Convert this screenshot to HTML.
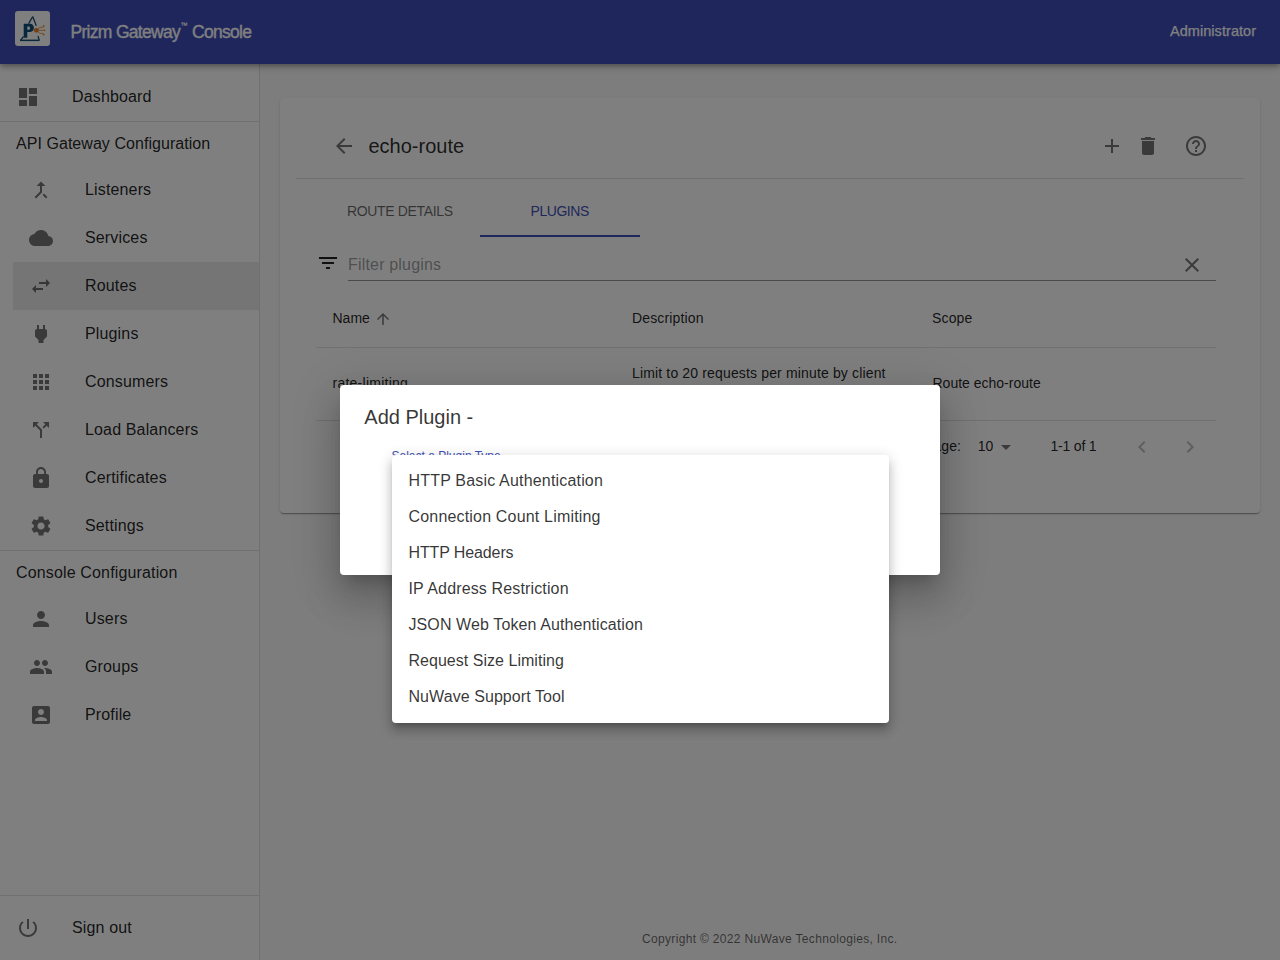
<!DOCTYPE html>
<html><head><meta charset="utf-8">
<style>
*{box-sizing:border-box;margin:0;padding:0}
html,body{width:1280px;height:960px;overflow:hidden}
body{font-family:"Liberation Sans",sans-serif;background:#fafafa;color:rgba(0,0,0,0.87);position:relative}
.abs{position:absolute}
.t{line-height:1;white-space:nowrap}
.div{position:absolute;height:1px;background:rgba(0,0,0,.12)}
#appbar{left:0;top:0;width:1280px;height:64px;background:#3d4cb8;box-shadow:0 2px 4px -1px rgba(0,0,0,.2),0 4px 5px 0 rgba(0,0,0,.14),0 1px 10px 0 rgba(0,0,0,.12);z-index:5}
#logo{left:15px;top:11px;width:35px;height:35px;background:#fff;border-radius:3px}
#side{left:0;top:64px;width:260px;height:896px;background:#fff;border-right:1px solid rgba(0,0,0,.12)}
#card{left:280px;top:98px;width:980px;height:415px;background:#fff;border-radius:4px;box-shadow:0 2px 1px -1px rgba(0,0,0,.2),0 1px 1px 0 rgba(0,0,0,.14),0 1px 3px 0 rgba(0,0,0,.12)}
#backdrop{left:0;top:0;width:1280px;height:960px;background:rgba(0,0,0,.5);z-index:10}
#dialog{left:340px;top:385px;width:600px;height:190px;background:#fff;border-radius:4px;z-index:11;box-shadow:0 11px 15px -7px rgba(0,0,0,.2),0 24px 38px 3px rgba(0,0,0,.14),0 9px 46px 8px rgba(0,0,0,.12)}
#menu{left:392px;top:455px;width:497px;height:268px;background:#fff;border-radius:4px;z-index:12;box-shadow:0 5px 5px -3px rgba(0,0,0,.2),0 8px 10px 1px rgba(0,0,0,.14),0 3px 14px 2px rgba(0,0,0,.12)}
</style></head><body>

<div id="appbar" class="abs">
<div id="logo" class="abs"><svg width="35" height="35" viewBox="0 0 35 35"><path d="M17.7 5.6 L13.6 12.6 M17.7 5.6 L21.3 14.8 M8.6 25.5 L5.6 29.2 M23 25 L24.2 29.2" stroke="#134f78" stroke-width="1.25" fill="none"/><path d="M5 28.6 H24.6 V30.1 H5z" fill="#134f78"/><path d="M8.7 12.7 H15.2 C17.4 12.7 18.9 14.4 18.9 16.85 C18.9 19.3 17.4 21 15.2 21 H12.3 V26.7 H8.7z M12.3 15.6 V18.7 H13.9 C14.6 18.7 15 18.1 15 17.15 C15 16.2 14.6 15.6 13.9 15.6z" fill="#0e5078"/><circle cx="21.3" cy="19.3" r="2.4" fill="#e8801e"/><path d="M22.5 19.3 H29.6 M22.8 18.2 L24.9 16.3 H28.4 M22.8 20.4 L24.9 22.4 H28.4" stroke="#e8801e" stroke-width="0.8" fill="none"/><circle cx="28.7" cy="14.9" r="0.95" fill="#e8801e"/><circle cx="29.6" cy="19.3" r="0.8" fill="#e8801e"/><circle cx="28.7" cy="23.6" r="0.95" fill="#e8801e"/></svg></div>
<div class="abs t" style="left:70.5px;top:24.00px;font-size:17.5px;color:#fff;letter-spacing:-0.7px;-webkit-text-stroke:0.35px #fff">Prizm Gateway</div>
<div class="abs t" style="left:179.5px;top:22px;font-size:8px;color:#fff;transform:scaleX(0.85);-webkit-text-stroke:0.2px #fff">™</div>
<div class="abs t" style="left:192px;top:24.00px;font-size:17.5px;color:#fff;letter-spacing:-0.7px;-webkit-text-stroke:0.35px #fff">Console</div>
<div class="abs t" style="left:1170px;top:24.00px;font-size:14.5px;color:#fff;-webkit-text-stroke:0.25px #fff;letter-spacing:0.05px">Administrator</div>
</div>
<div id="side" class="abs"></div>
<svg class="abs" style="left:16px;top:85px;width:24px;height:24px" viewBox="0 0 24 24"><path fill="rgba(0,0,0,.54)" d="M3 13h8V3H3v10zm0 8h8v-6H3v6zm10 0h8V11h-8v10zm0-18v6h8V3h-8z"/></svg>
<div class="abs t" style="left:72px;top:89.00px;font-size:16px;color:rgba(0,0,0,.87);letter-spacing:0.15px">Dashboard</div>
<div class="div" style="left:0;top:121px;width:259px"></div>
<div class="abs t" style="left:16px;top:136.00px;font-size:16px;color:rgba(0,0,0,.87);letter-spacing:0.05px">API Gateway Configuration</div>
<svg class="abs" style="left:29px;top:178px;width:24px;height:24px" viewBox="0 0 24 24"><path fill="rgba(0,0,0,.54)" d="M17 20.41L18.41 19 15 15.59 13.59 17 17 20.41zM7.5 8H11v5.59L5.59 19 7 20.41l6-6V8h3.5L12 3.5 7.5 8z"/></svg>
<div class="abs t" style="left:85px;top:182.00px;font-size:16px;color:rgba(0,0,0,.87);letter-spacing:0.15px">Listeners</div>
<svg class="abs" style="left:29px;top:226px;width:24px;height:24px" viewBox="0 0 24 24"><path fill="rgba(0,0,0,.54)" d="M19.35 10.04C18.67 6.59 15.64 4 12 4 9.11 4 6.6 5.64 5.35 8.04 2.34 8.36 0 10.91 0 14c0 3.310 2.690 6 6 6h13c2.76 0 5-2.24 5-5 0-2.64-2.05-4.78-4.65-4.96z"/></svg>
<div class="abs t" style="left:85px;top:230.00px;font-size:16px;color:rgba(0,0,0,.87);letter-spacing:0.15px">Services</div>
<div class="abs" style="left:13px;top:262px;width:246px;height:48px;background:rgba(0,0,0,.08)"></div>
<svg class="abs" style="left:29px;top:274px;width:24px;height:24px" viewBox="0 0 24 24"><path fill="rgba(0,0,0,.54)" d="M6.99 11L3 15l3.99 4v-3H14v-2H6.99v-3zM21 9l-3.99-4v3H10v2h7.01v3L21 9z"/></svg>
<div class="abs t" style="left:85px;top:278.00px;font-size:16px;color:rgba(0,0,0,.87);letter-spacing:0.15px">Routes</div>
<svg class="abs" style="left:29px;top:322px;width:24px;height:24px" viewBox="0 0 24 24"><path fill="rgba(0,0,0,.54)" d="M16.01 7L16 3h-2v4h-4V3H8v4h-.01C7 6.99 6 7.99 6 8.99v5.49L9.5 18v3h5v-3l3.5-3.51v-5.5c0-1-1-2-1.99-1.99z"/></svg>
<div class="abs t" style="left:85px;top:326.00px;font-size:16px;color:rgba(0,0,0,.87);letter-spacing:0.15px">Plugins</div>
<svg class="abs" style="left:29px;top:370px;width:24px;height:24px" viewBox="0 0 24 24"><path fill="rgba(0,0,0,.54)" d="M4 8h4V4H4v4zm6 12h4v-4h-4v4zm-6 0h4v-4H4v4zm0-6h4v-4H4v4zm6 0h4v-4h-4v4zm6-10v4h4V4h-4zm-6 4h4V4h-4v4zm6 6h4v-4h-4v4zm0 6h4v-4h-4v4z"/></svg>
<div class="abs t" style="left:85px;top:374.00px;font-size:16px;color:rgba(0,0,0,.87);letter-spacing:0.15px">Consumers</div>
<svg class="abs" style="left:29px;top:418px;width:24px;height:24px" viewBox="0 0 24 24"><path fill="rgba(0,0,0,.54)" d="M14 4l2.29 2.29-2.88 2.88 1.42 1.42 2.88-2.88L20 10V4zm-4 0H4v6l2.29-2.29 4.71 4.7V20h2v-8.41l-5.29-5.3z"/></svg>
<div class="abs t" style="left:85px;top:422.00px;font-size:16px;color:rgba(0,0,0,.87);letter-spacing:0.15px">Load Balancers</div>
<svg class="abs" style="left:29px;top:466px;width:24px;height:24px" viewBox="0 0 24 24"><path fill="rgba(0,0,0,.54)" d="M18 8h-1V6c0-2.76-2.24-5-5-5S7 3.24 7 6v2H6c-1.1 0-2 .9-2 2v10c0 1.1.9 2 2 2h12c1.1 0 2-.9 2-2V10c0-1.1-.9-2-2-2zm-6 9c-1.1 0-2-.9-2-2s.9-2 2-2 2 .9 2 2-.9 2-2 2zm3.1-9H8.9V6c0-1.71 1.39-3.1 3.1-3.1 1.71 0 3.1 1.39 3.1 3.1v2z"/></svg>
<div class="abs t" style="left:85px;top:470.00px;font-size:16px;color:rgba(0,0,0,.87);letter-spacing:0.15px">Certificates</div>
<svg class="abs" style="left:29px;top:514px;width:24px;height:24px" viewBox="0 0 24 24"><path fill="rgba(0,0,0,.54)" d="M19.14 12.94c.04-.3.06-.61.06-.94 0-.32-.02-.64-.07-.94l2.03-1.58c.18-.14.23-.41.12-.61l-1.92-3.32c-.12-.22-.37-.29-.59-.22l-2.39.96c-.5-.38-1.03-.7-1.62-.94l-.36-2.54c-.04-.24-.24-.41-.48-.41h-3.84c-.24 0-.43.17-.47.41l-.36 2.54c-.59.24-1.13.57-1.62.94l-2.39-.96c-.22-.08-.47 0-.59.22L2.74 8.870c-.12.21-.08.47.12.61l2.03 1.58c-.05.3-.09.63-.09.94s.02.64.07.94l-2.03 1.58c-.18.14-.23.41-.12.61l1.92 3.32c.12.22.37.29.59.22l2.39-.96c.5.38 1.03.7 1.62.94l.36 2.54c.05.24.24.41.48.41h3.84c.24 0 .44-.17.47-.41l.36-2.54c.59-.24 1.13-.56 1.62-.94l2.39.96c.22.08.47 0 .59-.22l1.92-3.32c.12-.22.07-.47-.12-.61l-2.01-1.58zM12 15.6c-1.98 0-3.6-1.62-3.6-3.6s1.62-3.6 3.6-3.6 3.6 1.62 3.6 3.6-1.62 3.6-3.6 3.6z"/></svg>
<div class="abs t" style="left:85px;top:518.00px;font-size:16px;color:rgba(0,0,0,.87);letter-spacing:0.15px">Settings</div>
<div class="div" style="left:0;top:550px;width:259px"></div>
<div class="abs t" style="left:16px;top:565.00px;font-size:16px;color:rgba(0,0,0,.87);letter-spacing:0.15px">Console Configuration</div>
<svg class="abs" style="left:29px;top:607px;width:24px;height:24px" viewBox="0 0 24 24"><path fill="rgba(0,0,0,.54)" d="M12 12c2.21 0 4-1.79 4-4s-1.79-4-4-4-4 1.79-4 4 1.79 4 4 4zm0 2c-2.67 0-8 1.34-8 4v2h16v-2c0-2.66-5.33-4-8-4z"/></svg>
<div class="abs t" style="left:85px;top:611.00px;font-size:16px;color:rgba(0,0,0,.87);letter-spacing:0.15px">Users</div>
<svg class="abs" style="left:29px;top:655px;width:24px;height:24px" viewBox="0 0 24 24"><path fill="rgba(0,0,0,.54)" d="M16 11c1.66 0 2.99-1.34 2.99-3S17.66 5 16 5c-1.66 0-3 1.34-3 3s1.34 3 3 3zm-8 0c1.66 0 2.99-1.34 2.990-3S9.66 5 8 5C6.34 5 5 6.34 5 8s1.34 3 3 3zm0 2c-2.33 0-7 1.17-7 3.5V19h14v-2.5c0-2.33-4.67-3.5-7-3.5zm8 0c-.29 0-.62.02-.97.05 1.16.84 1.97 1.97 1.97 3.45V19h6v-2.5c0-2.33-4.67-3.5-7-3.5z"/></svg>
<div class="abs t" style="left:85px;top:659.00px;font-size:16px;color:rgba(0,0,0,.87);letter-spacing:0.15px">Groups</div>
<svg class="abs" style="left:29px;top:703px;width:24px;height:24px" viewBox="0 0 24 24"><path fill="rgba(0,0,0,.54)" d="M3 5v14c0 1.1.89 2 2 2h14c1.1 0 2-.9 2-2V5c0-1.1-.9-2-2-2H5c-1.11 0-2 .9-2 2zm12 4c0 1.66-1.34 3-3 3s-3-1.34-3-3 1.34-3 3-3 3 1.34 3 3zm-9 8c0-2 4-3.1 6-3.1s6 1.1 6 3.1v1H6v-1z"/></svg>
<div class="abs t" style="left:85px;top:707.00px;font-size:16px;color:rgba(0,0,0,.87);letter-spacing:0.15px">Profile</div>
<div class="div" style="left:0;top:895px;width:259px"></div>
<svg class="abs" style="left:16px;top:916px;width:24px;height:24px" viewBox="0 0 24 24"><path fill="rgba(0,0,0,.54)" d="M13 3h-2v10h2V3zm4.83 2.17l-1.42 1.42C17.99 7.86 19 9.81 19 12c0 3.87-3.13 7-7 7s-7-3.13-7-7c0-2.19 1.01-4.14 2.58-5.42L6.17 5.17C4.23 6.82 3 9.26 3 12c0 4.97 4.03 9 9 9s9-4.03 9-9c0-2.74-1.23-5.18-3.17-6.83z"/></svg>
<div class="abs t" style="left:72px;top:920.00px;font-size:16px;color:rgba(0,0,0,.87);letter-spacing:0.15px">Sign out</div>
<div id="card" class="abs"></div>
<svg class="abs" style="left:332px;top:134px;width:24px;height:24px" viewBox="0 0 24 24"><path fill="rgba(0,0,0,.54)" d="M20 11H7.83l5.59-5.59L12 4l-8 8 8 8 1.41-1.41L7.83 13H20v-2z"/></svg>
<div class="abs t" style="left:368.5px;top:136.00px;font-size:20px;color:rgba(0,0,0,.84);">echo-route</div>
<svg class="abs" style="left:1100px;top:134px;width:24px;height:24px" viewBox="0 0 24 24"><path fill="rgba(0,0,0,.54)" d="M19 13h-6v6h-2v-6H5v-2h6V5h2v6h6v2z"/></svg>
<svg class="abs" style="left:1136px;top:134px;width:24px;height:24px" viewBox="0 0 24 24"><path fill="rgba(0,0,0,.54)" d="M6 19c0 1.1.9 2 2 2h8c1.1 0 2-.9 2-2V7H6v12zM19 4h-3.5l-1-1h-5l-1 1H5v2h14V4z"/></svg>
<svg class="abs" style="left:1184px;top:134px;width:24px;height:24px" viewBox="0 0 24 24"><path fill="rgba(0,0,0,.54)" d="M11 18h2v-2h-2v2zm1-16C6.48 2 2 6.48 2 12s4.48 10 10 10 10-4.48 10-10S17.520 2 12 2zm0 18c-4.41 0-8-3.59-8-8s3.59-8 8-8 8 3.59 8 8-3.59 8-8 8zm0-14c-2.21 0-4 1.79-4 4h2c0-1.1.9-2 2-2s2 .9 2 2c0 2-3 1.75-3 5h2c0-2.25 3-2.5 3-5 0-2.21-1.79-4-4-4z"/></svg>
<div class="div" style="left:296px;top:178px;width:948px"></div>
<div class="abs t" style="left:347px;top:204.00px;font-size:14px;color:rgba(0,0,0,.6);letter-spacing:-0.35px">ROUTE DETAILS</div>
<div class="abs t" style="left:530.5px;top:204.00px;font-size:14px;color:#3f51b5;letter-spacing:-0.45px">PLUGINS</div>
<div class="abs" style="left:480px;top:235px;width:160px;height:2px;background:#3f51b5"></div>
<svg class="abs" style="left:316px;top:251px;width:24px;height:24px" viewBox="0 0 24 24"><path fill="rgba(0,0,0,.87)" d="M10 18h4v-2h-4v2zM3 6v2h18V6H3zm3 7h12v-2H6v2z"/></svg>
<div class="abs t" style="left:348px;top:257.00px;font-size:16px;color:rgba(0,0,0,.4);letter-spacing:0.18px">Filter plugins</div>
<svg class="abs" style="left:1180px;top:253px;width:24px;height:24px" viewBox="0 0 24 24"><path fill="rgba(0,0,0,.54)" d="M19 6.41L17.59 5 12 10.59 6.41 5 5 6.41 10.59 12 5 17.59 6.41 19 12 13.41 17.59 19 19 17.59 13.41 12z"/></svg>
<div class="abs" style="left:348px;top:280px;width:868px;height:1px;background:rgba(0,0,0,.42)"></div>
<div class="abs t" style="left:332.5px;top:311.00px;font-size:14px;color:rgba(0,0,0,.87);letter-spacing:0px">Name</div>
<svg class="abs" style="left:373.8px;top:310px;width:18px;height:18px" viewBox="0 0 24 24"><path fill="rgba(0,0,0,.54)" d="M4 12l1.41 1.41L11 7.83V20h2V7.83l5.58 5.59L20 12l-8-8-8 8z"/></svg>
<div class="abs t" style="left:632px;top:311.00px;font-size:14px;color:rgba(0,0,0,.87);letter-spacing:0.15px">Description</div>
<div class="abs t" style="left:932px;top:311.00px;font-size:14px;color:rgba(0,0,0,.87);letter-spacing:0.15px">Scope</div>
<div class="div" style="left:316px;top:347px;width:900px;background:rgba(224,224,224,1)"></div>
<div class="abs t" style="left:332.5px;top:376.00px;font-size:14px;color:rgba(0,0,0,.87);letter-spacing:0.25px">rate-limiting</div>
<div class="abs t" style="left:632px;top:366.00px;font-size:14px;color:rgba(0,0,0,.87);letter-spacing:0.15px">Limit to 20 requests per minute by client</div>
<div class="abs t" style="left:932.5px;top:376.00px;font-size:14px;color:rgba(0,0,0,.87);letter-spacing:0px">Route echo-route</div>
<div class="div" style="left:316px;top:420px;width:900px;background:rgba(224,224,224,1)"></div>
<div class="abs t" style="left:861px;top:439.00px;font-size:14px;color:rgba(0,0,0,.87);letter-spacing:0.15px">Rows per page:</div>
<div class="abs t" style="left:977.8px;top:439.00px;font-size:14px;color:rgba(0,0,0,.87);">10</div>
<svg class="abs" style="left:994.3px;top:434.5px;width:24px;height:24px" viewBox="0 0 24 24"><path fill="rgba(0,0,0,.54)" d="M7 10l5 5 5-5z"/></svg>
<div class="abs t" style="left:1050.5px;top:439.00px;font-size:14px;color:rgba(0,0,0,.87);letter-spacing:-0.2px">1-1 of 1</div>
<svg class="abs" style="left:1130px;top:434.5px;width:24px;height:24px" viewBox="0 0 24 24"><path fill="rgba(0,0,0,.26)" d="M15.41 16.59L10.83 12l4.58-4.59L14 6l-6 6 6 6 1.41-1.41z"/></svg>
<svg class="abs" style="left:1178px;top:434.5px;width:24px;height:24px" viewBox="0 0 24 24"><path fill="rgba(0,0,0,.26)" d="M8.59 16.59L13.17 12 8.59 7.41 10 6l6 6-6 6-1.41-1.41z"/></svg>
<div class="abs t" style="left:642px;top:933.00px;font-size:12px;color:rgba(0,0,0,.6);letter-spacing:0.33px">Copyright © 2022 NuWave Technologies, Inc.</div>
<div id="backdrop" class="abs"></div>
<div id="dialog" class="abs">
<div class="abs t" style="left:24.3px;top:22.00px;font-size:20px;color:rgba(0,0,0,.8);">Add Plugin -</div>
<div class="abs t" style="left:51.5px;top:65.00px;font-size:12px;color:#3f51b5;">Select a Plugin Type</div>
</div>
<div id="menu" class="abs">
<div class="abs t" style="left:16.5px;top:18.00px;font-size:16px;color:rgba(0,0,0,.8);letter-spacing:0.18px">HTTP Basic Authentication</div>
<div class="abs t" style="left:16.5px;top:54.00px;font-size:16px;color:rgba(0,0,0,.8);letter-spacing:0.18px">Connection Count Limiting</div>
<div class="abs t" style="left:16.5px;top:90.00px;font-size:16px;color:rgba(0,0,0,.8);letter-spacing:-0.12px">HTTP Headers</div>
<div class="abs t" style="left:16.5px;top:126.00px;font-size:16px;color:rgba(0,0,0,.8);letter-spacing:0.14px">IP Address Restriction</div>
<div class="abs t" style="left:16.5px;top:162.00px;font-size:16px;color:rgba(0,0,0,.8);letter-spacing:0.1px">JSON Web Token Authentication</div>
<div class="abs t" style="left:16.5px;top:198.00px;font-size:16px;color:rgba(0,0,0,.8);letter-spacing:0.03px">Request Size Limiting</div>
<div class="abs t" style="left:16.5px;top:234.00px;font-size:16px;color:rgba(0,0,0,.8);letter-spacing:0.07px">NuWave Support Tool</div>
</div>
</body></html>
